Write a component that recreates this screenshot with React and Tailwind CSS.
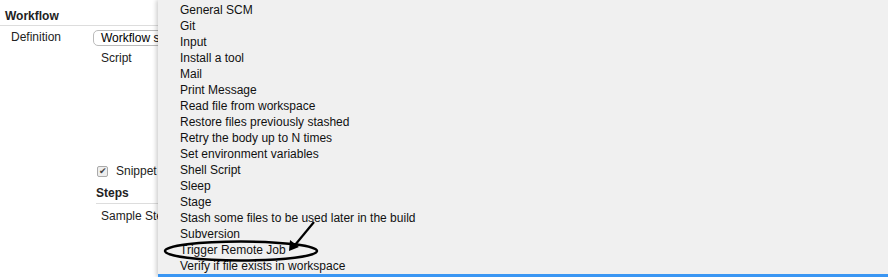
import React from "react";

const steps = [
  "General SCM",
  "Git",
  "Input",
  "Install a tool",
  "Mail",
  "Print Message",
  "Read file from workspace",
  "Restore files previously stashed",
  "Retry the body up to N times",
  "Set environment variables",
  "Shell Script",
  "Sleep",
  "Stage",
  "Stash some files to be used later in the build",
  "Subversion",
  "Trigger Remote Job",
  "Verify if file exists in workspace",
];

function App() {
  return (
    <div
      className="flex w-[888px] h-[277px] overflow-hidden bg-white text-[12px] text-[#222]"
      style={{ fontFamily: '"Liberation Sans", Arial, sans-serif' }}
    >
      {/* form behind the menu */}
      <div className="w-[158px] shrink-0 overflow-hidden">
        <div className="w-[300px]">
          <div className="h-[26px] pl-[5px] pt-[9px] font-bold border-b border-[#ddd] leading-[14px]">
            Workflow
          </div>
          <div className="flex pt-[4px]">
            <div className="w-[93px] pl-[11px] leading-[14px]">Definition</div>
            <div>
              <div className="h-[16px] w-[120px] pl-[7px] rounded-l-[5px] border border-[#bbb] leading-[14px] text-black">
                Workflow script
              </div>
              <div className="pl-[8px] pt-[5px] leading-[14px]">Script</div>
            </div>
          </div>
          <div className="pl-[97px] pt-[99px] flex items-center gap-[8px]">
            <span className="w-[11px] h-[11px] rounded-[2px] border border-[#aaa] bg-[#eee] text-[9px] leading-[9px] text-[#444] flex items-center justify-center">
              ✔
            </span>
            <span className="leading-[14px]">Snippet Generator</span>
          </div>
          <div className="ml-[96px] mt-[8px] h-[18px] font-bold border-b border-[#ddd] leading-[14px]">
            Steps
          </div>
          <div className="pl-[101px] pt-[5px] leading-[14px]">Sample Step</div>
        </div>
      </div>

      {/* dropdown menu */}
      <div className="relative flex-1 flex flex-col bg-[#f0f0f0] shadow-[-2px_0_4px_rgba(0,0,0,0.18)]">
        <ul className="pt-[2px] pl-[22px] flex-1">
          {steps.map((s) => (
            <li key={s} className="h-[16px] leading-[16px] text-[#111] whitespace-nowrap">
              {s}
            </li>
          ))}
        </ul>
        <div className="h-[3px] bg-[#3a96f3]" />

        <svg
          className="absolute left-0 top-0 pointer-events-none"
          width="200"
          height="277"
          viewBox="158 0 200 277"
        >
          <ellipse cx="241" cy="251" rx="76" ry="9.5" fill="none" stroke="#000" strokeWidth="2.5" />
          <line x1="314" y1="222" x2="295" y2="245" stroke="#000" strokeWidth="2.2" />
          <polygon points="289,251 290,240 299,247" fill="#000" />
        </svg>
      </div>
    </div>
  );
}

export default App;
